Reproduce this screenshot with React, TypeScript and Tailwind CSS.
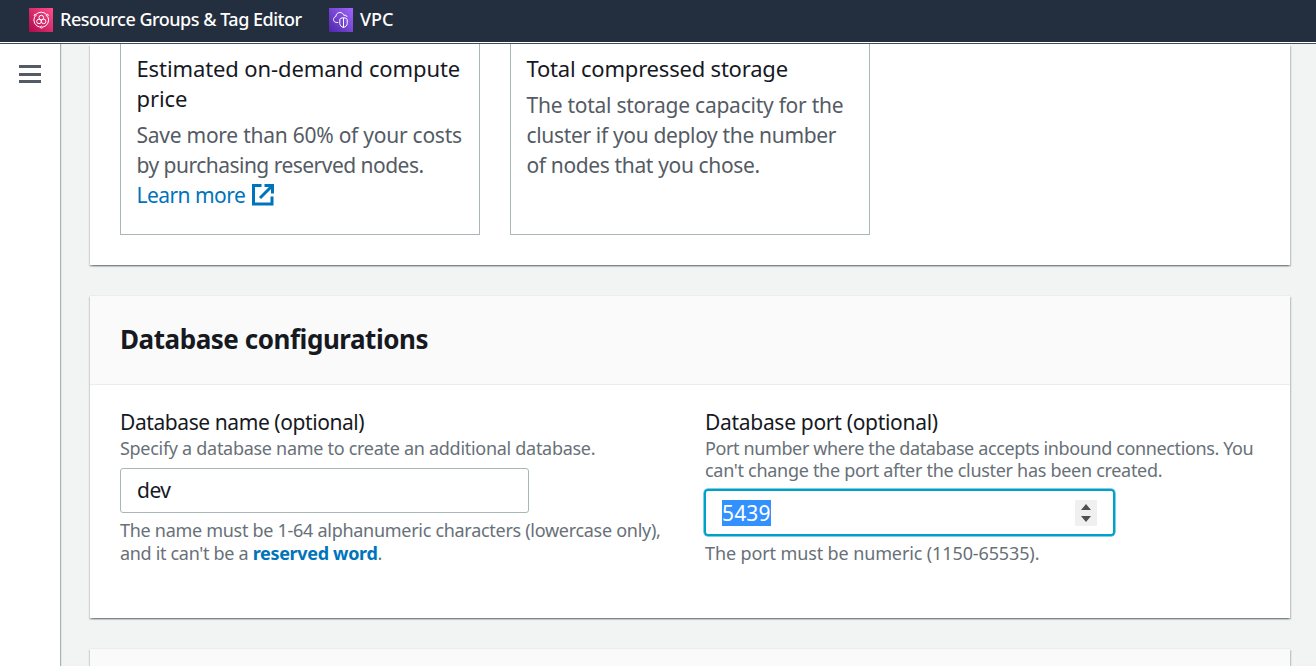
import type { ReactNode } from "react";

const cardShadow =
  "shadow-[0_1.5px_1.5px_0_rgba(0,28,36,0.3),1.5px_1.5px_1.5px_0_rgba(0,28,36,0.15),-1.5px_1.5px_1.5px_0_rgba(0,28,36,0.15)]";

function Line({ className = "", children }: { className?: string; children: ReactNode }) {
  return <div className={`whitespace-nowrap ${className}`}>{children}</div>;
}

function ResourceGroupsIcon() {
  return (
    <svg width="24" height="24" viewBox="0 0 24 24" fill="none" stroke="#fff" strokeWidth="1">
      <defs>
        <linearGradient id="rg" x1="0" y1="1" x2="1" y2="0">
          <stop offset="0" stopColor="#b0084d" />
          <stop offset="1" stopColor="#ff4f8b" />
        </linearGradient>
      </defs>
      <rect width="24" height="24" fill="url(#rg)" stroke="none" />
      <path d="M7.2 6.2a7.3 7.3 0 0 1 10 0M18.9 8.8a7.3 7.3 0 0 1-5 10.3M10.8 19.1A7.3 7.3 0 0 1 5.6 8.8" />
      <circle cx="6.2" cy="7.3" r="1" />
      <circle cx="18.3" cy="7.3" r="1" />
      <circle cx="12.4" cy="19.2" r="1" />
      <circle cx="12.3" cy="9.6" r="2.3" />
      <circle cx="10" cy="13.4" r="2.3" />
      <circle cx="14.6" cy="13.4" r="2.3" />
    </svg>
  );
}

function VpcIcon() {
  return (
    <svg width="24" height="24" viewBox="0 0 24 24" fill="none" stroke="#fff" strokeWidth="1">
      <defs>
        <linearGradient id="vpc" x1="0" y1="1" x2="1" y2="0">
          <stop offset="0" stopColor="#4d27a8" />
          <stop offset="1" stopColor="#a166ff" />
        </linearGradient>
      </defs>
      <rect width="24" height="24" fill="url(#vpc)" stroke="none" />
      <path d="M9.200 14.500H7.400C5.600 14.300 4.500 13 4.500 11.500c0-1.600 1-2.600 2.400-3C7 6 8.700 4.500 10.900 4.500c2 0 3.400 1.100 4 2.900 1.700-.7 3 .4 3.200 1.600" />
      <path d="M14.500 9.800c2.200 0 3.700.7 3.700 1.900v4c0 1.700-1.600 3-3.700 3.800-2.100-.8-3.700-2.100-3.700-3.800v-4c0-1.200 1.500-1.900 3.700-1.900zM14.500 9.800v9.700" />
    </svg>
  );
}

function ExternalIcon() {
  return (
    <svg className="ml-[7px]" width="22" height="22" viewBox="0 0 22 22" fill="none" stroke="#0073bb" strokeWidth="3">
      <path d="M9.500 1.500h-8v18.500h18.500v-7.500" />
      <path d="M12.500 1.500h8v8M20 2L8 14" />
    </svg>
  );
}

export default function App() {
  return (
    <div className="flex h-[666px] w-[1316px] flex-col overflow-hidden bg-white font-['Noto_Sans','Open_Sans',sans-serif] text-[#16191f]">
      <header className="flex h-[42px] shrink-0 items-start bg-[#232f3e] pl-[29px] pt-2 text-[18px] font-medium text-white">
        <div className="flex w-[300px] items-center gap-[7px]">
          <ResourceGroupsIcon />
          <span className="whitespace-nowrap pb-0.5 leading-[22px] tracking-[-0.49px]">Resource Groups &amp; Tag Editor</span>
        </div>
        <div className="flex items-center gap-[7px]">
          <VpcIcon />
          <span className="pb-0.5 leading-[22px]">VPC</span>
        </div>
      </header>
      <div className="mt-px h-px shrink-0 bg-[#414d5c]" />

      <div className="flex min-h-0 flex-1">
        <aside className="z-10 w-[60px] shrink-0 bg-white pl-[19px] pt-[21px] shadow-[1px_0_1px_0_rgba(0,28,36,0.3)]">
          <div className="flex w-[22px] flex-col gap-[4.500px]">
            <div className="h-[3px] bg-[#545b64]" />
            <div className="h-[3px] bg-[#545b64]" />
            <div className="h-[3px] bg-[#545b64]" />
          </div>
        </aside>

        <main className="flex flex-1 flex-col bg-[#f2f3f3] pl-[30px] pr-[26px]">
          <section className={`h-[221px] shrink-0 bg-white pl-[30px] ${cardShadow}`}>
            <div className="flex h-[191px] gap-[30px]">
              <div className="w-[360px] border border-t-0 border-[#aab7b8] pl-[15.500px] pt-[9px] text-[22px] leading-[30px]">
                <Line className="tracking-[-0.11px]">Estimated on-demand compute</Line>
                <Line className="tracking-[-0.11px]">price</Line>
                <div className="pt-[7px] text-[21px] text-[#545b64]">
                  <Line className="tracking-[-0.25px]">Save more than 60% of your costs</Line>
                  <Line className="tracking-[-0.52px]">by purchasing reserved nodes.</Line>
                  <div className="flex items-center text-[#0073bb]">
                    <span className="tracking-[-0.55px]">Learn more</span>
                    <ExternalIcon />
                  </div>
                </div>
              </div>
              <div className="w-[360px] border border-t-0 border-[#aab7b8] pl-[15.500px] pt-[9px] text-[22px] leading-[30px]">
                <Line className="tracking-[-0.2px]">Total compressed storage</Line>
                <div className="pt-[7px] text-[21px] text-[#545b64]">
                  <Line className="tracking-[-0.25px]">The total storage capacity for the</Line>
                  <Line className="tracking-[-0.34px]">cluster if you deploy the number</Line>
                  <Line className="tracking-[-0.36px]">of nodes that you chose.</Line>
                </div>
              </div>
            </div>
          </section>

          <section className={`mt-[30px] h-[323px] shrink-0 border-t border-[#eaeded] bg-white ${cardShadow}`}>
            <div className="flex h-[89px] items-center border-b border-[#eaeded] bg-[#fafafa] pb-0.5 pl-[30px]">
              <h2 className="text-[26px] font-bold tracking-[-0.45px]">Database configurations</h2>
            </div>
            <div className="flex pl-[30px] pt-[22px] text-[18px] leading-[22px] text-[#687078]">
              <div className="w-[585px]">
                <Line className="text-[21px] leading-[30px] tracking-[-0.42px] text-[#16191f]">Database name (optional)</Line>
                <Line className="tracking-[-0.29px]">Specify a database name to create an additional database.</Line>
                <div className="mt-[9px] mb-[6px] flex h-[45px] w-[409px] items-center rounded-[3px] border border-[#aab7b8] pb-px pl-4 text-[21px] tracking-[-0.5px] text-[#16191f]">
                  dev
                </div>
                <Line className="leading-[23px] tracking-[-0.29px]">The name must be 1-64 alphanumeric characters (lowercase only),</Line>
                <Line className="leading-[23px] tracking-[-0.32px]">
                  and it can't be a <b className="text-[#0073bb]">reserved word</b>.
                </Line>
              </div>
              <div>
                <Line className="text-[21px] leading-[30px] tracking-[-0.3px] text-[#16191f]">Database port (optional)</Line>
                <Line className="tracking-[-0.38px]">Port number where the database accepts inbound connections. You</Line>
                <Line className="tracking-[-0.3px]">can't change the port after the cluster has been created.</Line>
                <div className="-ml-px mt-[8px] mb-[6px] flex h-[47px] w-[411px] items-center justify-between rounded-[4px] border-2 border-[#00a1c9] pl-[16px] pr-[16px] text-[21px] shadow-[0_0_0_0.5px_#00a1c9]">
                  <span className="bg-[#3390ff] leading-[26px] tracking-[0.15px] text-white">5439</span>
                  <div className="flex h-[26px] w-[22px] items-center justify-center bg-[#f0f0f0]">
                    <svg width="10" height="18" viewBox="0 0 10 18" fill="#505050">
                      <path d="M0 6L5 0l5 6zM0 12h10l-5 6z" />
                    </svg>
                  </div>
                </div>
                <Line className="leading-[23px] tracking-[-0.12px]">The port must be numeric (1150-65535).</Line>
              </div>
            </div>
          </section>

          <section className={`mt-[30px] h-[60px] shrink-0 border-t border-[#eaeded] bg-[#fafafa] ${cardShadow}`} />
        </main>
      </div>
    </div>
  );
}
